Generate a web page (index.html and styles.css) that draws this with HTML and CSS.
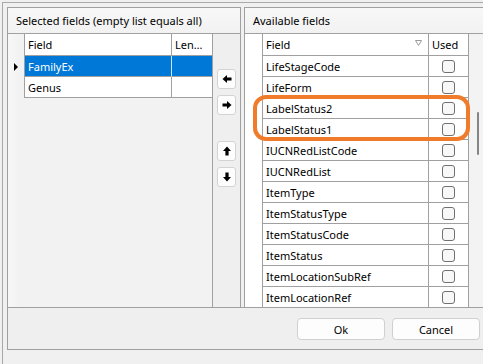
FILE: index.html
```html
<!DOCTYPE html>
<html>
<head>
<meta charset="utf-8">
<link rel="stylesheet" href="styles.css">
</head>
<body>
<div class="window">
  <div class="main">
    <section class="panel left">
      <div class="phead">Selected fields (empty list equals all)</div>
      <div class="pbody">
        <div class="lgrid">
          <div class="lrow hdr"><div class="ind"></div><div class="c f">Field</div><div class="c len">Len…</div></div>
          <div class="lrow sel"><div class="ind"><span class="tri"></span></div><div class="c f">FamilyEx</div><div class="c len"></div></div>
          <div class="lrow"><div class="ind"></div><div class="c f">Genus</div><div class="c len"></div></div>
        </div>
        <div class="btncol">
          <button class="ab b1"><svg width="10" height="10" viewBox="0 0 10 10"><path d="M0.5 5 L5 1 L5 3.4 L9.5 3.4 L9.5 6.6 L5 6.6 L5 9 Z"/></svg></button>
          <button class="ab b2"><svg width="10" height="10" viewBox="0 0 10 10"><path d="M9.5 5 L5 1 L5 3.4 L0.5 3.4 L0.5 6.6 L5 6.6 L5 9 Z"/></svg></button>
          <button class="ab b3"><svg width="10" height="10" viewBox="0 0 10 10"><path d="M5 0.5 L1 5 L3.4 5 L3.4 9.5 L6.6 9.5 L6.6 5 L9 5 Z"/></svg></button>
          <button class="ab b4"><svg width="10" height="10" viewBox="0 0 10 10"><path d="M5 9.5 L1 5 L3.4 5 L3.4 0.5 L6.6 0.5 L6.6 5 L9 5 Z"/></svg></button>
        </div>
      </div>
    </section>
    <section class="panel right">
      <div class="phead">Available fields</div>
      <div class="pbody">
        <div class="rgrid">
          <div class="rrow hdr"><div class="ind"></div><div class="c f">Field<svg class="sort" width="7" height="6" viewBox="0 0 7 6"><path d="M0.5 0.5 L6.5 0.5 L3.5 5.5 Z"/></svg></div><div class="c used">Used</div></div>
          <div class="rrow"><div class="ind"></div><div class="c f">LifeStageCode</div><div class="c used"><span class="cb"></span></div></div>
          <div class="rrow"><div class="ind"></div><div class="c f">LifeForm</div><div class="c used"><span class="cb"></span></div></div>
          <div class="rrow"><div class="ind"></div><div class="c f">LabelStatus2</div><div class="c used"><span class="cb"></span></div></div>
          <div class="rrow"><div class="ind"></div><div class="c f">LabelStatus1</div><div class="c used"><span class="cb"></span></div></div>
          <div class="rrow"><div class="ind"></div><div class="c f">IUCNRedListCode</div><div class="c used"><span class="cb"></span></div></div>
          <div class="rrow"><div class="ind"></div><div class="c f">IUCNRedList</div><div class="c used"><span class="cb"></span></div></div>
          <div class="rrow"><div class="ind"></div><div class="c f">ItemType</div><div class="c used"><span class="cb"></span></div></div>
          <div class="rrow"><div class="ind"></div><div class="c f">ItemStatusType</div><div class="c used"><span class="cb"></span></div></div>
          <div class="rrow"><div class="ind"></div><div class="c f">ItemStatusCode</div><div class="c used"><span class="cb"></span></div></div>
          <div class="rrow"><div class="ind"></div><div class="c f">ItemStatus</div><div class="c used"><span class="cb"></span></div></div>
          <div class="rrow"><div class="ind"></div><div class="c f">ItemLocationSubRef</div><div class="c used"><span class="cb"></span></div></div>
          <div class="rrow"><div class="ind"></div><div class="c f">ItemLocationRef</div><div class="c used"><span class="cb"></span></div></div>
        </div>
        <div class="sbar"><span class="thumb"></span></div>
      </div>
    </section>
  </div>
  <div class="bottom">
    <button class="pb">Ok</button>
    <button class="pb">Cancel</button>
  </div>
</div>
<svg class="annot" width="483" height="364" viewBox="0 0 483 364"><rect x="255" y="97" width="213" height="42" rx="11" ry="11"/></svg>
</body>
</html>
```
FILE: styles.css
```css
html, body {
  margin: 0;
  padding: 0;
}
body {
  background: #f0f0f0;
  width: 483px;
  height: 364px;
  overflow: hidden;
  position: relative;
  font-family: "Noto Sans", "Open Sans", sans-serif;
  font-size: 11px;
  color: #000;
}
.window {
  margin: 2px 0 0 2px;
  border-top: 1px solid #a9a9a9;
  border-left: 1px solid #a9a9a9;
  padding: 4px 0 0 4px;
  width: 500px;
  height: 370px;
  box-sizing: border-box;
}
.main {
  display: flex;
  gap: 3px;
  width: 483px;
  height: 301px;
}
.panel {
  box-sizing: border-box;
  border: 1px solid #a0a0a0;
  display: flex;
  flex-direction: column;
  overflow: hidden;
}
.panel.left { width: 234px; }
.panel.right { flex: 1; }
.phead {
  height: 25px;
  line-height: 25px;
  border-bottom: 1px solid #a0a0a0;
  padding-left: 8px;
  background: linear-gradient(#f8f8f8, #f2f2f2);
  white-space: nowrap;
}
.pbody {
  flex: 1;
  display: flex;
  overflow: hidden;
}
.lgrid {
  width: 204px;
  border-right: 1px solid #a0a0a0;
  background: linear-gradient(90deg, #f7f7f7, #f2f2f2 6%, #f2f2f2);
}
.lrow, .rrow {
  display: flex;
  height: 21px;
}
.lrow.hdr, .rrow.hdr { height: 22px; }
.ind {
  width: 16px;
  flex: none;
  display: flex;
  align-items: center;
  justify-content: center;
}
.rrow .ind { width: 17px; }
.c {
  box-sizing: border-box;
  border-left: 1px solid #a0a0a0;
  border-bottom: 1px solid #a0a0a0;
  background: #fff;
  padding-left: 3px;
  display: flex;
  align-items: center;
  white-space: nowrap;
  overflow: hidden;
}
.lrow .f { width: 147px; }
.lrow .len { width: 41px; padding-left: 3px; }
.lrow.sel .c {
  background: #0078d7;
  color: #fff;
}
.lrow.sel .len { border-left-color: #cfe4f7; }
.tri {
  width: 0;
  height: 0;
  border-top: 4px solid transparent;
  border-bottom: 4px solid transparent;
  border-left: 4px solid #000;
  margin-left: -1px;
}
.rgrid {
  width: 223px;
  border-right: 1px solid #a0a0a0;
  background: #fff;
  flex: none;
}
.rrow .f { width: 166px; }
.rrow .used {
  width: 40px;
  justify-content: center;
  padding-left: 0;
}
.rrow.hdr .used { justify-content: flex-start; padding-left: 3px; }
.sort {
  margin-left: auto;
  margin-right: 6px;
  margin-top: -4px;
  fill: none;
  stroke: #9a9a9a;
  stroke-width: 1;
}
.cb {
  width: 11px;
  height: 11px;
  border: 1px solid #707070;
  border-radius: 3px;
  background: #f8f8f8;
}
.sbar {
  flex: 1;
  background: #f3f3f3;
  position: relative;
}
.thumb {
  position: absolute;
  left: 8px;
  top: 78px;
  width: 2px;
  height: 43px;
  border-radius: 1px;
  background: #858585;
}
.btncol {
  width: 27px;
  display: flex;
  flex-direction: column;
  align-items: flex-start;
  padding-left: 4px;
  box-sizing: border-box;
  background: #efefef;
}
.ab {
  width: 19px;
  height: 20px;
  padding: 0;
  border: 1px solid #d3d3d3;
  border-radius: 3px;
  background: #fdfdfd;
  display: flex;
  align-items: center;
  justify-content: center;
}
.ab svg { fill: #000; }
.b1 { margin-top: 35px; }
.b2 { margin-top: 6px; }
.b3 { margin-top: 26px; }
.b4 { margin-top: 6px; }
.bottom {
  box-sizing: border-box;
  margin-top: -1px;
  width: 483px;
  height: 43px;
  border: 1px solid #a0a0a0;
  display: flex;
  justify-content: flex-end;
  align-items: flex-start;
  gap: 7px;
  padding: 10px 9px 0 0;
  background: #efefef;
}
.pb {
  width: 88px;
  height: 22px;
  padding: 0;
  border: 1px solid #d0d0d0;
  border-radius: 4px;
  background: #fdfdfd;
  font-family: "Noto Sans", "Open Sans", sans-serif;
  font-size: 11px;
  color: #000;
}
.annot {
  position: absolute;
  left: 0;
  top: 0;
  pointer-events: none;
}
.annot rect {
  fill: none;
  stroke: #ef7b2b;
  stroke-width: 4;
}
```
